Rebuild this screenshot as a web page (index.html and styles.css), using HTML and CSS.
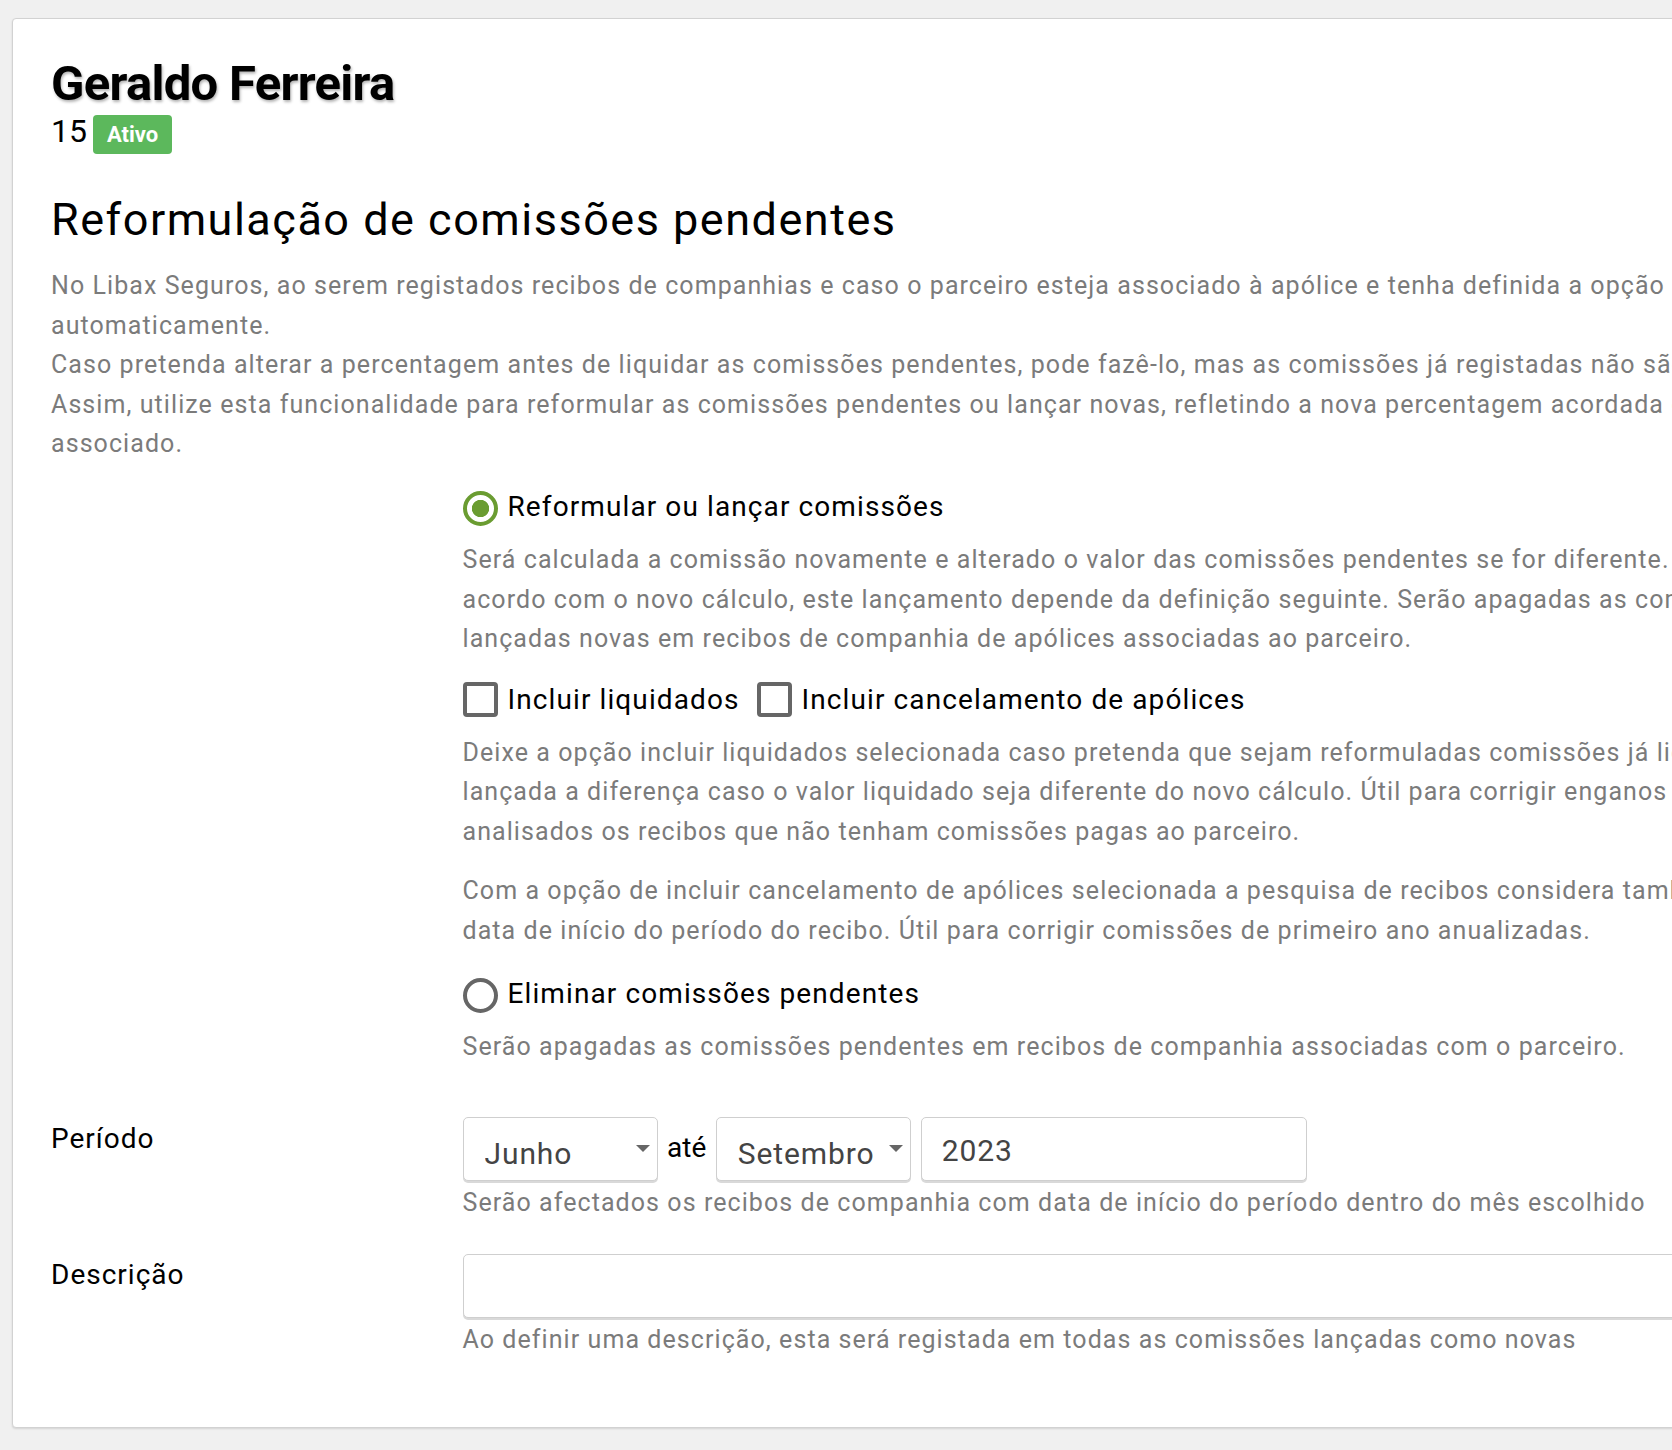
FILE: index.html
```html
<!DOCTYPE html>
<html lang="pt">
<head>
<meta charset="utf-8">
<title>Reformulação de comissões pendentes</title>
<link rel="stylesheet" href="styles.css">
</head>
<body>
<div class="page">
  <div class="card">
    <h1 class="name">Geraldo Ferreira</h1>
    <div class="meta">15<span class="badge">Ativo</span></div>
    <h2 class="title">Reformulação de comissões pendentes</h2>
    <p class="intro">No Libax Seguros, ao serem registados recibos de companhias e caso o parceiro esteja associado à apólice e tenha definida a opção de comissões, são lançadas as comissões pendentes<br>automaticamente.<br>Caso pretenda alterar a percentagem antes de liquidar as comissões pendentes, pode fazê-lo, mas as comissões já registadas não são alteradas.<br>Assim, utilize esta funcionalidade para reformular as comissões pendentes ou lançar novas, refletindo a nova percentagem acordada com o parceiro em recibos de apólices onde este esteja<br>associado.</p>

    <div class="form">
      <div class="row">
        <div class="label"></div>
        <div class="control">
          <label class="option">
            <input type="radio" class="radio" name="acao" checked>
            <span class="option-text">Reformular ou lançar comissões</span>
          </label>
          <p class="help first">Será calculada a comissão novamente e alterado o valor das comissões pendentes se for diferente. Caso não exista comissão e deva ser lançada de<br>acordo com o novo cálculo, este lançamento depende da definição seguinte. Serão apagadas as comissões pendentes que deixaram de existir e<br>lançadas novas em recibos de companhia de apólices associadas ao parceiro.</p>

          <div class="checks">
            <label class="check">
              <input type="checkbox" class="checkbox">
              <span class="check-text">Incluir liquidados</span>
            </label>
            <label class="check">
              <input type="checkbox" class="checkbox">
              <span class="check-text">Incluir cancelamento de apólices</span>
            </label>
          </div>
          <p class="help after-checks">Deixe a opção incluir liquidados selecionada caso pretenda que sejam reformuladas comissões já liquidadas ao parceiro. Nesse caso, será<br>lançada a diferença caso o valor liquidado seja diferente do novo cálculo. Útil para corrigir enganos de percentagem. Caso contrário, apenas são<br>analisados os recibos que não tenham comissões pagas ao parceiro.</p>
          <p class="help para">Com a opção de incluir cancelamento de apólices selecionada a pesquisa de recibos considera também a data de cancelamento da apólice em vez da<br>data de início do período do recibo. Útil para corrigir comissões de primeiro ano anualizadas.</p>

          <label class="option second">
            <input type="radio" class="radio" name="acao">
            <span class="option-text">Eliminar comissões pendentes</span>
          </label>
          <p class="help first">Serão apagadas as comissões pendentes em recibos de companhia associadas com o parceiro.</p>
        </div>
      </div>

      <div class="row field periodo">
        <label class="label">Período</label>
        <div class="control">
          <div class="inline">
            <div class="select-wrap month-from">
              <select class="select">
                <option>Janeiro</option><option>Fevereiro</option><option>Março</option><option>Abril</option><option>Maio</option>
                <option selected>Junho</option><option>Julho</option><option>Agosto</option><option>Setembro</option><option>Outubro</option><option>Novembro</option><option>Dezembro</option>
              </select>
            </div>
            <span class="ate">até</span>
            <div class="select-wrap month-to">
              <select class="select">
                <option>Janeiro</option><option>Fevereiro</option><option>Março</option><option>Abril</option><option>Maio</option>
                <option>Junho</option><option>Julho</option><option>Agosto</option><option selected>Setembro</option><option>Outubro</option><option>Novembro</option><option>Dezembro</option>
              </select>
            </div>
            <input type="text" class="input year" value="2023">
          </div>
          <p class="help tight">Serão afectados os recibos de companhia com data de início do período dentro do mês escolhido</p>
        </div>
      </div>

      <div class="row field descricao">
        <label class="label">Descrição</label>
        <div class="control">
          <input type="text" class="input wide">
          <p class="help tight">Ao definir uma descrição, esta será registada em todas as comissões lançadas como novas</p>
        </div>
      </div>
    </div>
  </div>
</div>
</body>
</html>
```

FILE: styles.css
```css
html {
  background: #f0f0f0;
  overflow: hidden;
}

body {
  margin: 0;
  font-family: Roboto, "Noto Sans", "Liberation Sans", sans-serif;
  color: #000;
}

.page {
  padding: 18px 0 22px 12px;
}

.card {
  width: 2100px;
  background: #fff;
  border: 1px solid #d2d2d2;
  border-radius: 4px;
  box-shadow: 0 1px 2px rgba(0, 0, 0, 0.12);
  padding: 38px 38px 68px 38px;
}

.name {
  margin: 0;
  font-size: 49px;
  line-height: 54px;
  font-weight: 700;
  letter-spacing: -0.7px;
  color: #000;
  text-shadow: 1px 2px 3px rgba(0, 0, 0, 0.3);
}

.meta {
  font-size: 32px;
  line-height: 40px;
  color: #000;
}

.badge {
  display: inline-block;
  margin-left: 6px;
  padding: 0 14px;
  font-size: 22px;
  line-height: 39px;
  font-weight: 700;
  color: #fff;
  background: #5cb85c;
  border-radius: 4px;
}

.title {
  margin: 40.5px 0 0 0;
  font-size: 45px;
  line-height: 49.5px;
  font-weight: 400;
  letter-spacing: 1.5px;
  color: #000;
}

.intro,
.help {
  font-size: 25px;
  line-height: 39.4px;
  letter-spacing: 1.07px;
  color: #7b7b7b;
  white-space: nowrap;
}

.intro {
  margin: 22.4px 0 0 0;
}

.form {
  margin-top: 27.9px;
}

.row {
  display: grid;
  grid-template-columns: 411.5px 1fr;
}

.label {
  font-size: 28px;
  line-height: 31px;
  letter-spacing: 1px;
  color: #000;
}

.option,
.check {
  display: flex;
  align-items: flex-start;
  gap: 10px;
}

.option.second {
  margin-top: 27.7px;
}

.option-text {
  font-size: 28px;
  line-height: 31px;
  letter-spacing: 1.1px;
  color: #000;
}

.check-text {
  font-size: 28px;
  line-height: 35px;
  letter-spacing: 1.1px;
  color: #000;
}

.radio {
  appearance: none;
  -webkit-appearance: none;
  flex: none;
  margin: 0;
  width: 35px;
  height: 35px;
  border: 4px solid #666;
  border-radius: 50%;
  background: #fff;
}

.radio:checked {
  border: 4.5px solid #6a9c31;
  background: radial-gradient(circle, #6a9c31 0 8.3px, #fff 9px);
}

.checkbox {
  appearance: none;
  -webkit-appearance: none;
  flex: none;
  margin: 0;
  width: 35px;
  height: 35px;
  border: 4px solid #666;
  border-radius: 4px;
  background: #fff;
}

.checks {
  display: flex;
  gap: 17px;
  margin-top: 23.7px;
}

.help {
  margin: 0;
}

.help.first {
  margin-top: 14px;
}

.help.after-checks {
  margin-top: 15.8px;
}

.help.para {
  margin-top: 20px;
}

.field {
  margin-top: 50.5px;
}

.field.descricao {
  margin-top: 32px;
}

.field .label {
  padding-top: 6px;
}

.field.descricao .label {
  padding-top: 5.2px;
}

.inline {
  display: flex;
  align-items: flex-start;
  gap: 9.5px;
}

.select-wrap {
  position: relative;
  width: 195px;
}

.select-wrap.month-to {
  margin-right: 0.5px;
}

.select-wrap::after {
  content: "";
  position: absolute;
  right: 8px;
  top: 28.5px;
  border-left: 7px solid transparent;
  border-right: 7px solid transparent;
  border-top: 7.5px solid #666;
  pointer-events: none;
}

.select,
.input {
  box-sizing: border-box;
  display: block;
  width: 100%;
  height: 64px;
  margin: 0;
  border: 1px solid #cfcfcf;
  border-radius: 5px;
  box-shadow: 0 2px 0 #d9d9d9;
  background: #fff;
  font-family: Roboto, "Noto Sans", "Liberation Sans", sans-serif;
  font-size: 30px;
  letter-spacing: 0.9px;
  color: #444;
  outline: none;
}

.select {
  appearance: none;
  -webkit-appearance: none;
  padding: 10px 30px 0 21px;
}

.ate {
  font-size: 28px;
  line-height: 31px;
  letter-spacing: 0;
  padding-top: 15px;
  color: #000;
}

.input {
  padding: 4px 20px 0 20px;
}

.input.year {
  width: 386px;
}

.help.tight {
  margin-top: 2px;
}
```
